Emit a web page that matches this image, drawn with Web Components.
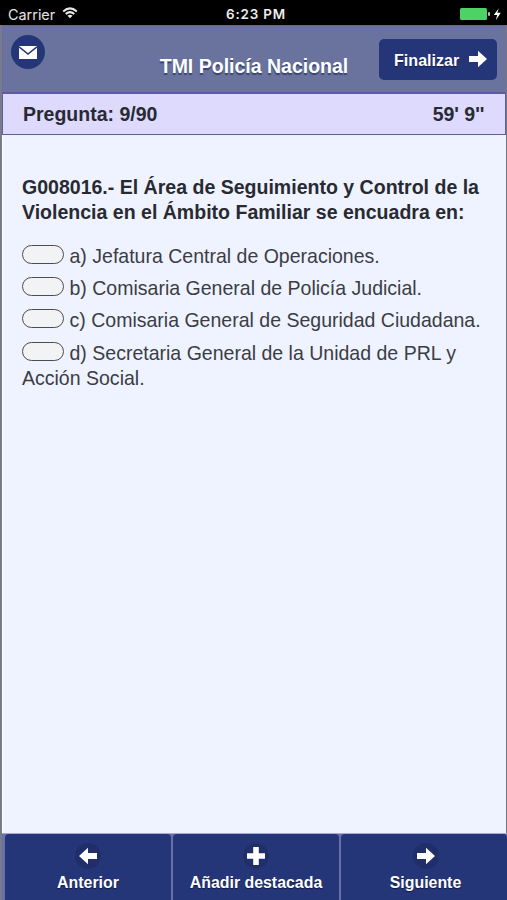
<!DOCTYPE html>
<html lang="es">
<head>
<meta charset="utf-8">
<title>TMI Policía Nacional</title>
<style>
html,body{margin:0;height:100%;overflow:hidden}
body{font-family:"Liberation Sans",Arial,sans-serif;background:#eff3ff}
</style>
</head>
<body>
<quiz-app></quiz-app>
<script>
function define(name, html) {
  const t = document.createElement('template');
  t.innerHTML = html.trim();
  customElements.define(name, class extends HTMLElement {
    constructor() {
      super();
      this.attachShadow({mode: 'open'}).appendChild(t.content.cloneNode(true));
    }
  });
}

define('status-bar', `
<style>
:host{display:grid;grid-template-columns:218px auto 1fr;align-items:center;height:25px;background:#000;color:#e4e4e4;font:14.4px/23px "Inter","Liberation Sans",sans-serif;padding:0 6px 0 8px;box-sizing:border-box}
.left{display:flex;align-items:center;gap:7px;padding-top:2px}
.left svg{margin-top:-2px}
.time{font-size:13.4px;font-weight:600;letter-spacing:.85px;padding-top:3px;color:#eee}
.right{display:flex;justify-content:flex-end;align-items:center;padding-top:1px}
svg{display:block}
</style>
<div class="left"><span>Carrier</span>
<svg width="16" height="12" viewBox="0 0 16 12" fill="none" stroke="#e8e8e8" stroke-width="2"><path d="M1.2 4.4Q8-1.7 14.8 4.4"/><path d="M3.7 7Q8 3.2 12.3 7"/><path d="M8 11.3L5.5 8.7Q8 6.7 10.5 8.7Z" fill="#e8e8e8" stroke="none"/></svg></div>
<div class="time">6:23 PM</div>
<div class="right"><svg width="42" height="14" viewBox="0 0 42 14"><rect x="1" y="1" width="27" height="12" rx="1.5" fill="#4cd265"/><rect x="29" y="5" width="2" height="4" rx="1" fill="#bbb"/><path d="M39.8 1.2L34.8 8h3.4l-1.4 5.2 5-7.4h-3.5z" fill="#fff"/></svg></div>`);

define('arrow-icon', `
<style>:host{display:block}:host([left]) svg{transform:scaleX(-1)}svg{display:block}</style>
<svg width="18" height="18" viewBox="0 0 18 18"><path d="M0 6H9V0.8L18 9L9 17.2V12H0Z" fill="#fff"/></svg>`);

define('app-header', `
<style>
:host{display:grid;grid-template-columns:125px 1fr 126px;height:67px;background:#69739d;border-top:1px solid #6561a3;border-left:1px solid #7166a8;box-sizing:border-box}
.mail{width:34px;height:34px;border-radius:50%;background:#243578;margin:9px 0 0 8px;display:grid;place-items:center}
h1{margin:28px 0 0;font-size:19.5px;line-height:24px;font-weight:700;color:#fff;text-align:center;text-shadow:0 1.5px 1px #36436e;white-space:nowrap}
button{font:700 16.1px/20px "Liberation Sans",Arial,sans-serif;color:#fff;text-shadow:0 1px 1px #111a48;background:#243578;border:0;border-radius:5px;width:118px;height:41px;margin:13px 0 0 -1px;padding:1px 10px 0 15px;display:flex;align-items:center;justify-content:space-between}
arrow-icon{margin-top:-2px}
</style>
<div class="mail"><svg width="18" height="13" viewBox="0 0 18 13"><rect width="18" height="13" fill="#fff"/><path d="M0 .8L9 8L18 .8" fill="none" stroke="#243578" stroke-width="1.6"/></svg></div>
<h1><slot></slot></h1>
<button>Finalizar<arrow-icon></arrow-icon></button>`);

define('progress-bar', `
<style>
:host{display:flex;justify-content:space-between;align-items:center;height:43px;box-sizing:border-box;background:#dddafd;border:1px solid #62608f;border-top:2px solid #6159a5;color:#282a32;font-weight:700;font-size:19.5px;padding:1px 20.5px 0 20px}
</style>
<slot name="count"></slot><slot name="time"></slot>`);

define('answer-option', `
<style>
:host{display:block;font-size:19.52px;line-height:25px;color:#3b3d44;margin-bottom:7.2px;white-space:pre-line}
i{display:inline-block;box-sizing:border-box;width:42px;height:19px;border:1.5px solid #4b4d52;border-radius:10px;background:#f2f3f4;vertical-align:-1px;margin-right:5.5px}
</style><i></i><slot></slot>`);

define('question-panel', `
<style>
:host{display:block;flex:1;padding:40px 0 0 19px;background:#eff3ff;border-left:1px solid #fff}
h2{margin:0 0 19px;font-size:19.54px;line-height:25px;font-weight:700;color:#282a32;white-space:pre-line}
</style><h2><slot name="title"></slot></h2><slot></slot>`);

define('nav-button', `
<style>
:host{display:flex;flex-direction:column;align-items:center;background:#243578;border-radius:4px 4px 0 0;color:#fff;font-weight:700;font-size:15.9px;line-height:20px;text-shadow:0 1px 1px #101840}
.disc{width:26px;height:26px;border-radius:50%;background:#202e69;display:grid;place-items:center;margin:9px 0 4px}
</style><div class="disc"><slot name="icon"></slot></div><span><slot></slot></span>`);

define('bottom-nav', `
<style>
:host{display:grid;grid-template-columns:166px 166px 1fr;gap:2px;height:67px;box-sizing:border-box;margin-right:-1px;background:#6970a7;border-top:1px solid #a9a9df;padding-left:3px}
svg{display:block}
</style>
<nav-button><arrow-icon slot="icon" left></arrow-icon>Anterior</nav-button>
<nav-button><svg slot="icon" width="18" height="18" viewBox="0 0 18 18"><path d="M6.2 0h5.6v6.2H18v5.6h-6.2V18H6.2v-6.2H0V6.2h6.2z" fill="#fff"/></svg><span>Añadir destacada</span></nav-button>
<nav-button style="padding-left:3px"><arrow-icon slot="icon"></arrow-icon><span>Siguiente</span></nav-button>`);

define('quiz-app', `
<style>
:host{display:flex;flex-direction:column;height:100vh}
main{flex:1;min-height:0;display:flex;flex-direction:column;border-left:2px solid #777b8b;border-right:1px solid #747786}
</style>
<status-bar></status-bar>
<main>
<app-header>TMI Policía Nacional</app-header>
<progress-bar><span slot="count">Pregunta: 9/90</span><span slot="time">59' 9''</span></progress-bar>
<question-panel>
<span slot="title">G008016.- El Área de Seguimiento y Control de la
Violencia en el Ámbito Familiar se encuadra en:</span>
<answer-option>a) Jefatura Central de Operaciones.</answer-option>
<answer-option>b) Comisaria General de Policía Judicial.</answer-option>
<answer-option>c) Comisaria General de Seguridad Ciudadana.</answer-option>
<answer-option>d) Secretaria General de la Unidad de PRL y
Acción Social.</answer-option>
</question-panel>
<bottom-nav></bottom-nav>
</main>`);
</script>
</body>
</html>
